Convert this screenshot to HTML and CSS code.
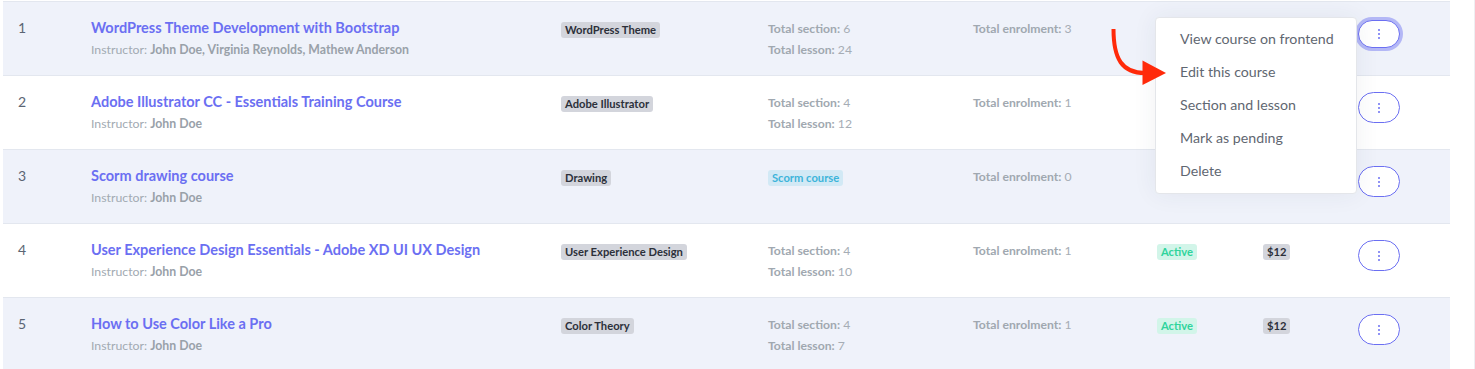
FILE: index.html
```html
<!DOCTYPE html>
<html lang="en">
<head>
<meta charset="utf-8">
<title>Courses</title>
<link rel="stylesheet" href="styles.css">
</head>
<body>
<div class="page">
  <div class="table">
    <div class="row odd">
      <div class="num">1</div>
      <div class="course">
        <a class="title" href="#">WordPress Theme Development with Bootstrap</a>
        <div class="meta">Instructor: <b>John Doe, Virginia Reynolds, Mathew Anderson</b></div>
      </div>
      <div><span class="badge gray">WordPress Theme</span></div>
      <div class="stats"><div><b>Total section:</b> 6</div><div><b>Total lesson:</b> 24</div></div>
      <div class="stats"><div><b>Total enrolment:</b> 3</div></div>
      <div></div>
      <div></div>
      <div class="act">
        <button class="kebab focused"><span></span><span></span><span></span></button>
        <div class="menu">
          <div class="item">View course on frontend</div>
          <div class="item">Edit this course</div>
          <div class="item">Section and lesson</div>
          <div class="item">Mark as pending</div>
          <div class="item">Delete</div>
        </div>
        <svg class="arrow" viewBox="0 0 80 70" width="80" height="70">
          <path d="M13.5 8 C13.5 38 22 52 45 52" fill="none" stroke="#ff2a0a" stroke-width="4"/>
          <polygon points="66,52 42.5,39.5 42.5,64" fill="#ff2a0a"/>
        </svg>
      </div>
    </div>
    <div class="row">
      <div class="num">2</div>
      <div class="course">
        <a class="title" href="#">Adobe Illustrator CC - Essentials Training Course</a>
        <div class="meta">Instructor: <b>John Doe</b></div>
      </div>
      <div><span class="badge gray">Adobe Illustrator</span></div>
      <div class="stats"><div><b>Total section:</b> 4</div><div><b>Total lesson:</b> 12</div></div>
      <div class="stats"><div><b>Total enrolment:</b> 1</div></div>
      <div></div>
      <div></div>
      <div class="act"><button class="kebab"><span></span><span></span><span></span></button></div>
    </div>
    <div class="row odd">
      <div class="num">3</div>
      <div class="course">
        <a class="title" href="#">Scorm drawing course</a>
        <div class="meta">Instructor: <b>John Doe</b></div>
      </div>
      <div><span class="badge gray">Drawing</span></div>
      <div><span class="badge blue">Scorm course</span></div>
      <div class="stats"><div><b>Total enrolment:</b> 0</div></div>
      <div></div>
      <div></div>
      <div class="act"><button class="kebab"><span></span><span></span><span></span></button></div>
    </div>
    <div class="row">
      <div class="num">4</div>
      <div class="course">
        <a class="title" href="#">User Experience Design Essentials - Adobe XD UI UX Design</a>
        <div class="meta">Instructor: <b>John Doe</b></div>
      </div>
      <div><span class="badge gray">User Experience Design</span></div>
      <div class="stats"><div><b>Total section:</b> 4</div><div><b>Total lesson:</b> 10</div></div>
      <div class="stats"><div><b>Total enrolment:</b> 1</div></div>
      <div><span class="badge green">Active</span></div>
      <div><span class="badge gray">$12</span></div>
      <div class="act"><button class="kebab"><span></span><span></span><span></span></button></div>
    </div>
    <div class="row odd">
      <div class="num">5</div>
      <div class="course">
        <a class="title" href="#">How to Use Color Like a Pro</a>
        <div class="meta">Instructor: <b>John Doe</b></div>
      </div>
      <div><span class="badge gray">Color Theory</span></div>
      <div class="stats"><div><b>Total section:</b> 4</div><div><b>Total lesson:</b> 7</div></div>
      <div class="stats"><div><b>Total enrolment:</b> 1</div></div>
      <div><span class="badge green">Active</span></div>
      <div><span class="badge gray">$12</span></div>
      <div class="act"><button class="kebab"><span></span><span></span><span></span></button></div>
    </div>
  </div>
</div>
</body>
</html>
```
FILE: styles.css
```css
* { box-sizing: border-box; }
html, body { margin: 0; padding: 0; background: #fff; }
body { font-family: "Lato", "Open Sans", sans-serif; overflow: hidden; }
.page {
  width: 1475px;
  height: 369px;
  padding: 1px 0 0 3px;
  border-right: 1px solid #eeeff2;
}
.table {
  width: 1447px;
  border-top: 1px solid #e3e7ef;
}
.row {
  display: grid;
  grid-template-columns: 73px 470px 207px 205px 184px 106px 95px 92px;
  padding: 16px 0 0 15px;
  height: 74px;
  border-bottom: 1px solid #e3e7ef;
  background: #fff;
}
.row.odd { background: #eff2fa; }
.num { font-size: 14px; line-height: 20px; color: #5b6573; }
.course { display: flex; flex-direction: column; gap: 2px; }
.title {
  font-size: 14.5px; font-weight: 700; line-height: 20px;
  color: #6b6ff2; text-decoration: none;
}
.meta { font-size: 12.3px; line-height: 18px; color: #a2aab2; margin-top: 1px; }
.meta b { color: #99a1a9; font-weight: 700; }
.stats { display: flex; flex-direction: column; gap: 3px; padding-top: 2px; }
.stats div { font-size: 12.2px; line-height: 18px; color: #a6adb5; }
.stats b { font-weight: 700; color: #a0a8b0; }
.badge {
  display: inline-block;
  margin-top: 4px;
  font-size: 11.2px; font-weight: 700; line-height: 12px;
  padding: 2px 4px; border-radius: 3px;
}
.badge.gray { background: #d3d5dc; color: #2c303a; }
.badge.blue { background: #d2e9f5; color: #3db4da; }
.badge.green { background: #d2f5e9; color: #2fd49c; }
.act { position: relative; }
.kebab {
  width: 42px; height: 31px;
  border: 1px solid #6b6ff2; border-radius: 16px;
  background: #fff;
  display: flex; flex-direction: column; align-items: center; justify-content: center;
  gap: 2px; padding: 0;
}
.kebab span { width: 2px; height: 2px; border-radius: 50%; background: #6b6ff2; }
.kebab.focused { height: 28px; margin-top: 2px; box-shadow: 0 0 0 3px rgba(107, 111, 242, 0.45); }
.menu {
  position: absolute;
  right: 93px; top: -1px;
  width: 202px;
  padding: 4px 0 6px;
  background: #fff;
  border: 1px solid #e4e6ea;
  border-radius: 4px;
  box-shadow: 0 0 24px rgba(40, 50, 80, 0.07);
  z-index: 5;
}
.item {
  height: 33px; line-height: 33px;
  padding-left: 24px;
  font-size: 14.2px; color: #5f6771;
}
.arrow { position: absolute; left: -258px; top: 3px; z-index: 6; }
```
